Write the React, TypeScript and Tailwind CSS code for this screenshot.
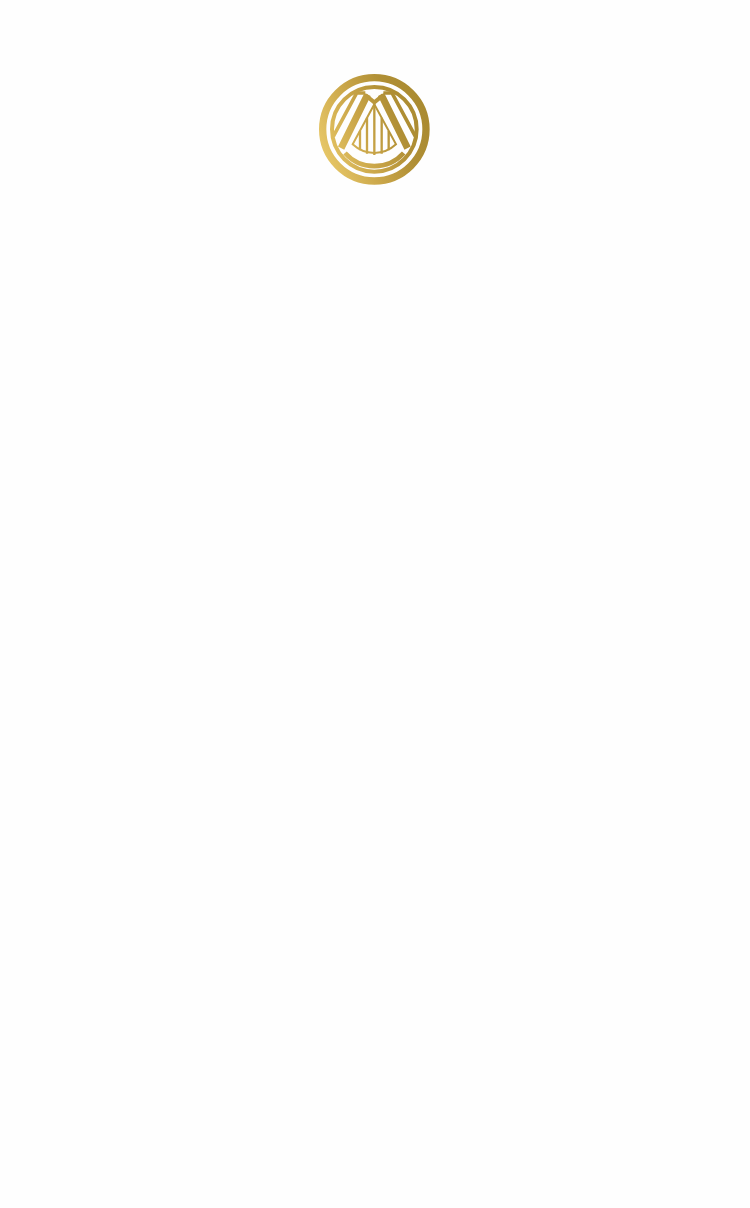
const Logo = () => (
  <svg width="130" height="130" viewBox="0 0 390 390" fill="none" aria-label="Logo">
    <defs>
      <linearGradient id="gold" x1="30" y1="260" x2="360" y2="130" gradientUnits="userSpaceOnUse">
        <stop offset="0" stopColor="#e8c868" />
        <stop offset="0.4" stopColor="#c9a548" />
        <stop offset="0.7" stopColor="#b08f35" />
        <stop offset="1" stopColor="#a98a30" />
      </linearGradient>
    </defs>
    <g stroke="url(#gold)">
      <circle cx="193" cy="193" r="155" strokeWidth="22" />
      <circle cx="193" cy="193" r="127" strokeWidth="12" />
      <path d="M105 264 A118 118 0 0 0 281 264" strokeWidth="14" />
      <path d="M70 214 L140 84 L166 84" strokeWidth="11" />
      <path d="M316 214 L246 84 L220 84" strokeWidth="11" />
      <path d="M98 240 L168 98" strokeWidth="21" strokeLinecap="square" />
      <path d="M288 240 L218 98" strokeWidth="21" strokeLinecap="square" />
      <path d="M166 90 L193 112 L220 90" strokeWidth="12" />
      <path d="M193 118 L128 238 A95 95 0 0 0 258 238 Z" strokeWidth="6" />
      <path d="M150 198 V256 M171 158 V266 M193 118 V270 M215 158 V266 M236 198 V256" strokeWidth="7" />
    </g>
  </svg>
);

export default function App() {
  return (
    <main className="min-h-[1208px] bg-[#fefefe] flex flex-col items-center pt-[65px]">
      <Logo />
    </main>
  );
}
